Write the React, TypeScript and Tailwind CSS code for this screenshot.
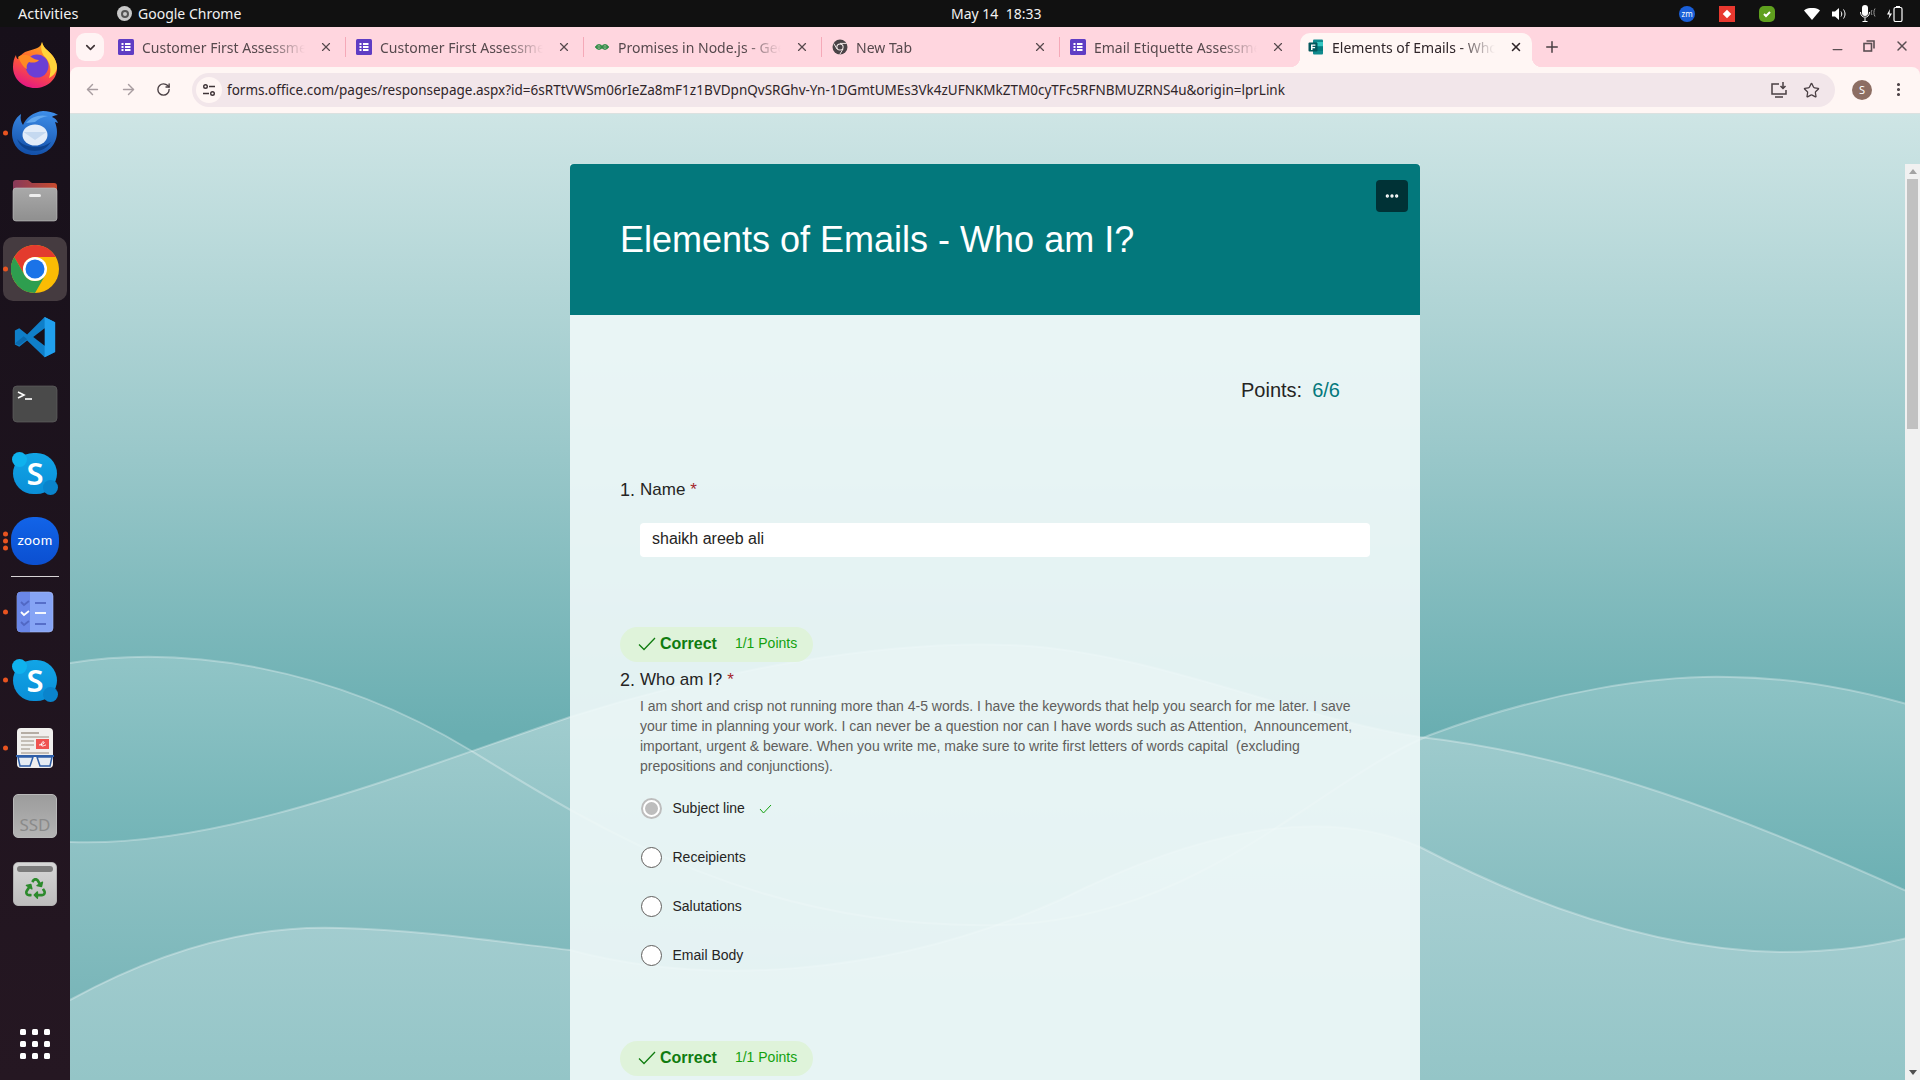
import { ArrowLeft, ArrowRight, ChevronDown, Ellipsis, Minus, MoreVertical, Plus, RotateCw, Star, X } from "lucide-react"
import { FaRecycle } from "react-icons/fa"

const uiFont = "font-['Noto_Sans',sans-serif]"

const urlText =
  "forms.office.com/pages/responsepage.aspx?id=6sRTtVWSm06rIeZa8mF1z1BVDpnQvSRGhv-Yn-1DGmtUMEs3Vk4zUFNKMkZTM0cyTFc5RFNBMUZRNS4u&origin=lprLink"

const tabs = [
  { title: "Customer First Assessment", icon: "form" },
  { title: "Customer First Assessment", icon: "form" },
  { title: "Promises in Node.js - GeeksforGeeks", icon: "gfg" },
  { title: "New Tab", icon: "chrome" },
  { title: "Email Etiquette Assessment", icon: "form" },
  { title: "Elements of Emails - Who am I?", icon: "forms", active: true },
]

const options = ["Subject line", "Receipients", "Salutations", "Email Body"]

function FormFavicon() {
  return (
    <svg width="16" height="16" viewBox="0 0 16 16">
      <rect width="16" height="16" rx="1.5" fill="#5f3dc4" />
      <g fill="#fff">
        <rect x="3.5" y="4" width="2" height="2" />
        <rect x="7" y="4" width="5.5" height="2" />
        <rect x="3.5" y="7" width="2" height="2" />
        <rect x="7" y="7" width="5.5" height="2" />
        <rect x="3.5" y="10" width="2" height="2" />
        <rect x="7" y="10" width="5.5" height="2" />
      </g>
    </svg>
  )
}

function GfgFavicon() {
  return (
    <svg width="16" height="16" viewBox="0 0 16 16" fill="none" stroke="#2f8d46" strokeWidth="1.3">
      <path d="M1 8h14M8 8c-1-3-5-3-6 0 1 3 5 3 6 0zM8 8c1-3 5-3 6 0-1 3-5 3-6 0z" />
    </svg>
  )
}

function ChromeFavicon() {
  return (
    <svg width="16" height="16" viewBox="0 0 16 16">
      <circle cx="8" cy="8" r="7.5" fill="#4a4347" />
      <circle cx="8" cy="8" r="3.6" fill="#fff5f4" />
      <circle cx="8" cy="8" r="2.6" fill="#4a4347" />
      <path d="M8 4.4h6.6M5 10l-3.2-5.5M11 10l-3.3 5.5" stroke="#fff5f4" strokeWidth="0.9" />
    </svg>
  )
}

function FormsFavicon() {
  return (
    <svg width="16" height="16" viewBox="0 0 16 16">
      <rect x="5" y="0.5" width="10" height="15" rx="1" fill="#0f8a8d" />
      <rect x="9" y="3" width="6" height="4" fill="#33c5c0" />
      <rect x="9" y="8" width="6" height="4" fill="#047b7f" />
      <rect x="0.5" y="3.5" width="9" height="9" rx="1" fill="#03585c" />
      <path d="M3 5.5h4.4v1.3H4.5v1.2h2.6v1.3H4.5v1.6H3z" fill="#fff" />
    </svg>
  )
}

function Favicon({ icon }: { icon: string }) {
  if (icon === "form") return <FormFavicon />
  if (icon === "gfg") return <GfgFavicon />
  if (icon === "chrome") return <ChromeFavicon />
  return <FormsFavicon />
}

function FirefoxIcon() {
  return (
    <svg width="48" height="48" viewBox="0 0 48 48">
      <defs>
        <linearGradient id="ffBody" x1="0.7" y1="0" x2="0.3" y2="1">
          <stop offset="0" stopColor="#ffb01f" />
          <stop offset="0.5" stopColor="#ff5a35" />
          <stop offset="1" stopColor="#e31587" />
        </linearGradient>
      </defs>
      <path d="M31 1c1 6 6 8 10 13 4 5 5 9 5 13 0 12-10 20-22 20S2 38 2 26c0-5 1-9 3-12 0 2 1 4 2 4 2-4 6-7 10-8 7-2 13-3 14-9z" fill="url(#ffBody)" />
      <path d="M31 1c1 6 6 8 10 13 4 5 5 9 5 13-1 5-4 8-8 10 3-8 1-16-4-21-3-3-5-9-3-15z" fill="#ffd43b" />
      <circle cx="26" cy="25" r="11.5" fill="#6b3fd4" />
      <path d="M7 16c4-3 9-3 13 0 3 2 5 3 8 3-2 3-7 3-10 2-2 2-3 4-2 7-4-2-6-6-9-12z" fill="#ff8a24" />
    </svg>
  )
}

function ThunderbirdIcon() {
  return (
    <svg width="48" height="48" viewBox="0 0 48 48">
      <defs>
        <linearGradient id="tbBody" x1="0.6" y1="0" x2="0.4" y2="1">
          <stop offset="0" stopColor="#3d8de8" />
          <stop offset="1" stopColor="#124fa8" />
        </linearGradient>
      </defs>
      <path d="M10 5c-1 5 0 8 2 11 3-7 10-13 20-14 5 0 10 1 15 4-3 0-5 1-6 2 3 1 5 3 6 6l-3-1c1 3 2 6 2 10 0 13-10 23-23 23S1 37 1 24C1 16 4 9 10 5z" fill="url(#tbBody)" />
      <path d="M15 14c5-6 13-9 22-7-6 1-10 3-13 6z" fill="#63a9f0" />
      <ellipse cx="24" cy="26" rx="12.500" ry="10.500" fill="#e3edf9" />
      <path d="M12.500 23l11.500 8 11.500-8" fill="#c5d9f0" />
      <path d="M6 30c3 8 10 12 18 12 7 0 12-3 16-9-4 3-9 5-15 5-8 0-14-2-19-8z" fill="#0d438f" />
    </svg>
  )
}

function FilesIcon() {
  return (
    <svg width="48" height="48" viewBox="0 0 48 48">
      <defs>
        <linearGradient id="folderTop" x1="0" y1="0" x2="1" y2="0">
          <stop offset="0" stopColor="#873a5a" />
          <stop offset="1" stopColor="#c84c2f" />
        </linearGradient>
        <linearGradient id="folderBody" x1="0" y1="0" x2="0" y2="1">
          <stop offset="0" stopColor="#a9a9a9" />
          <stop offset="1" stopColor="#8f8f8f" />
        </linearGradient>
      </defs>
      <path d="M2 6a3 3 0 0 1 3-3h12l4 3h22a3 3 0 0 1 3 3v10H2z" fill="url(#folderTop)" />
      <rect x="2" y="11" width="44" height="33" rx="3" fill="url(#folderBody)" stroke="#c5c5c5" strokeWidth="0.6" />
      <rect x="18" y="17" width="12" height="3" rx="1.5" fill="#eeeeee" />
    </svg>
  )
}

function ChromeIcon() {
  return (
    <svg width="48" height="48" viewBox="0 0 48 48">
      <circle cx="24" cy="24" r="24" fill="#fbbc04" />
      <path d="M3.2 12A24 24 0 0 1 44.8 12H24A12 12 0 0 0 13.600 30Z" fill="#e33b2e" />
      <path d="M3.2 12A24 24 0 0 0 24 48L34.400 30A12 12 0 0 1 13.600 30Z" fill="#2e9e4f" />
      <circle cx="24" cy="24" r="12" fill="#fff" />
      <circle cx="24" cy="24" r="9.5" fill="#1a73e8" />
    </svg>
  )
}

function VsCodeIcon() {
  return (
    <svg width="42" height="42" viewBox="0 0 48 48">
      <path d="M35 1l12 6v34l-12 6-20-19-9 7-5-2.500V16.500l5-2.500 9 7z" fill="#0f7fc9" />
      <path d="M35 1l12 6v34l-12 6z" fill="#21a0ee" />
      <path d="M35 14v20L22 24z" fill="#17101a" />
      <path d="M1 31.500l5 2 9-7-4-3.500z" fill="#0b6aae" />
    </svg>
  )
}

function TerminalIcon() {
  return (
    <svg width="48" height="48" viewBox="0 0 48 48">
      <rect x="2" y="5" width="44" height="36" rx="4" fill="#4a4a4a" stroke="#5e5e5e" strokeWidth="0.7" />
      <path d="M7 11l6 3-6 3" fill="none" stroke="#fff" strokeWidth="1.6" />
      <path d="M14 18h7" stroke="#fff" strokeWidth="1.6" />
    </svg>
  )
}

function SkypeIcon() {
  return (
    <div className="relative flex h-[41px] w-[44px] items-center justify-center rounded-[21px] bg-gradient-to-b from-[#12a5e6] to-[#0a8fd8]">
      <span className="absolute -left-[1px] -top-[1px] h-[15px] w-[15px] rounded-full bg-[#0fb2ee]" />
      <span className="absolute -bottom-[1px] -right-[1px] h-[15px] w-[15px] rounded-full bg-[#0a84cc]" />
      <span className="relative font-['Noto_Sans',sans-serif] text-[31px] font-semibold leading-none text-white">S</span>
    </div>
  )
}

function ZoomIcon() {
  return (
    <div className="flex h-[48px] w-[48px] items-center justify-center rounded-[22px] bg-gradient-to-b from-[#1264e8] to-[#0b4fd0]">
      <span className="-mt-[3px] font-['Lato',sans-serif] text-[14px] tracking-[0.4px] text-white">zoom</span>
    </div>
  )
}

function TodoIcon() {
  return (
    <svg width="48" height="48" viewBox="0 0 48 48">
      <rect x="6" y="4" width="36" height="40" rx="4" fill="#86a4f5" stroke="#a9bdf8" strokeWidth="0.6" />
      <path d="M6 8a4 4 0 0 1 4-4h9v40h-9a4 4 0 0 1-4-4z" fill="#6a87e8" />
      <g fill="none" strokeWidth="1.8">
        <path d="M10 14l3 3 5-4" stroke="#5168c4" />
        <path d="M10 24l3 3 5-4" stroke="#fff" />
        <path d="M10 34l3 3 5-4" stroke="#5168c4" />
        <path d="M24 15h11" stroke="#5168c4" />
        <path d="M24 25h11" stroke="#fff" />
        <path d="M24 36h11" stroke="#5168c4" />
      </g>
    </svg>
  )
}

function ReaderIcon() {
  return (
    <svg width="48" height="48" viewBox="0 0 48 48">
      <rect x="6" y="4" width="36" height="40" rx="4" fill="#f0efed" />
      <rect x="10" y="8" width="18" height="2" fill="#b5ada4" />
      <g fill="#c4beb6">
        <rect x="10" y="12" width="28" height="2" />
        <rect x="10" y="16" width="13" height="2" />
        <rect x="10" y="20" width="13" height="2" />
        <rect x="10" y="24" width="9" height="2" />
        <rect x="10" y="28" width="28" height="2" />
      </g>
      <rect x="25" y="15" width="13" height="10" fill="#ef5350" />
      <path d="M28 21c3 0 6-2 5-3-2-1-4 3-2 4 2 0 3-1 4-1" fill="none" stroke="#fff" strokeWidth="1" />
      <path d="M5 32h38" stroke="#2f5fa8" strokeWidth="2" />
      <path d="M7 33l2 9h10l3-9zM26 33l3 9h10l2-9z" fill="#e6ecf2" stroke="#2f5fa8" strokeWidth="1.500" />
    </svg>
  )
}

function SsdIcon() {
  return (
    <div className="flex h-[44px] w-[44px] items-end justify-center rounded-[5px] border border-[#b9b9b9] bg-gradient-to-b from-[#9c9c9c] to-[#b4b4b4] pb-[1px]">
      <span className="font-['Noto_Sans',sans-serif] text-[17px] leading-[22px] text-[#8a8a8a]">SSD</span>
    </div>
  )
}

function TrashIcon() {
  return (
    <div className="flex h-[44px] w-[44px] flex-col items-center rounded-[5px] border border-[#b2b2b2] bg-gradient-to-b from-[#d7d7d7] to-[#bdbdbd] pt-[3px]">
      <span className="h-[6px] w-[36px] rounded-[3px] bg-[#7c7c7c]" />
      <FaRecycle size={21} className="mt-[6px] text-[#2c8a2c]" />
    </div>
  )
}

function GridIcon() {
  return (
    <div className="grid grid-cols-3 gap-[6px]">
      {Array.from({ length: 9 }).map((_, i) => (
        <span key={i} className="h-[6px] w-[6px] rounded-[1.5px] bg-white" />
      ))}
    </div>
  )
}

function DockItem({ dots = 0, active, children }: { dots?: number; active?: boolean; children: React.ReactNode }) {
  return (
    <div className="relative flex h-[68px] w-full items-center justify-center">
      {active && <span className="absolute left-[3px] top-[2px] h-[64px] w-[64px] rounded-[10px] bg-[#453b40]" />}
      {dots > 0 && (
        <span className="absolute left-[3px] top-1/2 flex -translate-y-1/2 flex-col gap-[2px]">
          {Array.from({ length: dots }).map((_, i) => (
            <span key={i} className="h-[5px] w-[5px] rounded-full bg-[#e95420]" />
          ))}
        </span>
      )}
      <span className="relative flex items-center justify-center">{children}</span>
    </div>
  )
}

function Dock() {
  return (
    <aside className="flex w-[70px] shrink-0 flex-col items-center bg-gradient-to-b from-[#17101a] to-[#251722] pt-[4px]">
      <DockItem>
        <FirefoxIcon />
      </DockItem>
      <DockItem dots={1}>
        <ThunderbirdIcon />
      </DockItem>
      <DockItem>
        <FilesIcon />
      </DockItem>
      <DockItem dots={1} active>
        <ChromeIcon />
      </DockItem>
      <DockItem>
        <VsCodeIcon />
      </DockItem>
      <DockItem>
        <TerminalIcon />
      </DockItem>
      <DockItem>
        <SkypeIcon />
      </DockItem>
      <DockItem dots={3}>
        <ZoomIcon />
      </DockItem>
      <div className="mt-[1px] h-[1px] w-[48px] bg-[#d8d4d6]" />
      <div className="h-[1px]" />
      <DockItem dots={1}>
        <TodoIcon />
      </DockItem>
      <DockItem dots={1}>
        <SkypeIcon />
      </DockItem>
      <DockItem dots={1}>
        <ReaderIcon />
      </DockItem>
      <DockItem>
        <SsdIcon />
      </DockItem>
      <DockItem>
        <TrashIcon />
      </DockItem>
      <div className="mt-auto pb-[21px]">
        <GridIcon />
      </div>
    </aside>
  )
}

function TopBar() {
  return (
    <header className={`flex h-[27px] shrink-0 items-center bg-[#111111] text-[14px] text-[#f2f2f2] ${uiFont}`}>
      <div className="w-[117px] pl-[18px] text-[14.5px]">Activities</div>
      <div className="flex items-center gap-[6px]">
        <span className="flex h-[15px] w-[15px] items-center justify-center rounded-full bg-[#c8c8c8]">
          <span className="h-[8px] w-[8px] rounded-full border-2 border-[#555555]" />
        </span>
        <span>Google Chrome</span>
      </div>
      <div className="absolute left-[951px] whitespace-pre">May 14  18:33</div>
      <div className="ml-auto flex items-center pr-[17px]">
        <span className="flex h-[16px] w-[16px] items-center justify-center rounded-full bg-[#1a5fd8] text-[8px] text-white">zm</span>
        <span className="ml-[24px] flex h-[16px] w-[16px] items-center justify-center bg-[#e8382f]">
          <span className="h-[6px] w-[6px] rotate-45 bg-white" />
        </span>
        <span className="ml-[24px] flex h-[16px] w-[16px] items-center justify-center rounded-[5px] bg-[#5fa01e]">
          <svg width="10" height="10" viewBox="0 0 10 10" fill="none" stroke="#fff" strokeWidth="2">
            <path d="M2 5l2 2 4-4" />
          </svg>
        </span>
        <svg className="ml-[29px]" width="16" height="12" viewBox="0 0 16 12">
          <path d="M0 2.500C4-1 12-1 16 2.500L8 12z" fill="#fff" />
        </svg>
        <svg className="ml-[12px]" width="15" height="14" viewBox="0 0 15 14">
          <path d="M0 4.500h3L7 1v12L3 9.500H0z" fill="#fff" />
          <path d="M9 4.500c1 1.500 1 3.500 0 5M11.500 2.500c2 3 2 6 0 9" fill="none" stroke="#fff" strokeWidth="1" />
        </svg>
        <svg className="ml-[13px]" width="18" height="17" viewBox="0 0 18 17" fill="none">
          <rect x="2" y="0" width="6" height="11" rx="3" fill="#fff" />
          <path d="M0.500 7c0 7 9 7 9 0M5 13v4M2.500 16.500h5" stroke="#fff" />
          <path d="M12 5c-1 1.500-1 3.500 0 5M15 3.500c-1.500 2.500-1.500 5.500 0 8" stroke="#999" />
        </svg>
        <svg className="ml-[9px]" width="16" height="16" viewBox="0 0 16 16" fill="none">
          <path d="M3 3L0 8.500h2.500L1.500 13 5 7.500H2.500z" fill="#fff" />
          <rect x="7" y="1.500" width="8" height="14" rx="1.500" stroke="#fff" strokeWidth="1.200" />
          <rect x="9" y="0" width="4" height="1.500" fill="#fff" />
        </svg>
      </div>
    </header>
  )
}

function TabStrip() {
  return (
    <div className={`flex h-[40px] shrink-0 items-end bg-[#ffd6df] text-[14px] ${uiFont}`}>
      <div className="mb-[6px] ml-[6px] mr-[3px] flex h-[28px] w-[28px] shrink-0 items-center justify-center rounded-[9px] bg-[#fff4f4]">
        <ChevronDown size={15} strokeWidth={2.6} className="text-[#3f3437]" />
      </div>
      {tabs.map((tab, i) => (
        <div
          key={i}
          className={`relative flex h-[34px] shrink-0 items-center pb-[6px] ${
            tab.active
              ? "ml-[3px] w-[232px] rounded-t-[10px] bg-[#fff6f4] pl-[8px] text-[#2f2529]"
              : "w-[238px] pl-[11px] text-[#56494d]"
          }`}
        >
          {i > 0 && !tab.active && (
            <span className="absolute left-0 top-[4px] h-[20px] w-[1px] bg-[#f5a9b8]" />
          )}
          {tab.active && (
            <>
              <span className="absolute -left-[10px] bottom-0 h-[10px] w-[10px] bg-[radial-gradient(circle_at_0_0,#ffd6df_10px,#fff6f4_10.5px)]" />
              <span className="absolute -right-[10px] bottom-0 h-[10px] w-[10px] bg-[radial-gradient(circle_at_100%_0,#ffd6df_10px,#fff6f4_10.5px)]" />
            </>
          )}
          <Favicon icon={tab.icon} />
          <span className="ml-[8px] w-[168px] overflow-hidden whitespace-nowrap [mask-image:linear-gradient(to_right,#000_75%,transparent_97%)]">
            {tab.title}
          </span>
          <X size={14} strokeWidth={tab.active ? 2.6 : 2} className="ml-[9px] shrink-0" />
        </div>
      ))}
      <Plus size={18} strokeWidth={2} className="mb-[11px] ml-[11px] text-[#4a3f43]" />
      <div className="mb-[10px] ml-auto flex items-center text-[#5a4e52]">
        <Minus size={15} strokeWidth={2} className="mr-[18px] mt-[8px]" />
        <svg className="mr-[19px]" width="12" height="12" viewBox="0 0 12 12" fill="none" stroke="currentColor" strokeWidth="1.6">
          <rect x="1" y="3.500" width="7.500" height="7.500" />
          <path d="M3.500 1h7.500v7.500" />
        </svg>
        <X size={16} strokeWidth={2.2} className="mr-[10px]" />
      </div>
    </div>
  )
}

function Toolbar() {
  return (
    <div className={`flex h-[47px] shrink-0 items-start rounded-t-[8px] border-b border-[#dbe1e0] bg-[#fff6f4] pt-[6px] ${uiFont}`}>
      <ArrowLeft size={17} strokeWidth={2} className="ml-[14px] mt-[8px] text-[#a89da0]" />
      <ArrowRight size={17} strokeWidth={2} className="ml-[19px] mt-[8px] text-[#a89da0]" />
      <RotateCw size={15} strokeWidth={2.2} className="ml-[19px] mt-[9px] text-[#4a3f43]" />
      <div className="ml-[21px] flex h-[34px] w-[1643px] items-center rounded-full bg-[#f2e6ea]">
        <span className="ml-[4px] flex h-[26px] w-[26px] items-center justify-center rounded-full bg-[#fff6f4]">
          <svg width="14" height="14" viewBox="0 0 14 14" fill="none" stroke="#3f3437" strokeWidth="1.4">
            <circle cx="3.500" cy="3.500" r="1.800" />
            <path d="M7 3.500h6M1 10.500h6" />
            <circle cx="10.500" cy="10.500" r="1.800" />
          </svg>
        </span>
        <span className="ml-[5px] whitespace-nowrap text-[13.5px] text-[#2f2529]">{urlText}</span>
        <svg className="ml-auto" width="18" height="18" viewBox="0 0 18 18" fill="none" stroke="#4a3f43" strokeWidth="1.5">
          <path d="M9 3H2v10h14V9M5 16h8" />
          <path d="M13 1v6M10.500 5l2.500 2.500L15.500 5" />
        </svg>
        <Star size={17} strokeWidth={1.8} className="ml-[15px] mr-[15px] text-[#4a3f43]" />
      </div>
      <span className="ml-[17px] mt-[7px] flex h-[20px] w-[20px] items-center justify-center rounded-full bg-[#8d6e63] text-[11px] text-white">S</span>
      <MoreVertical size={17} strokeWidth={2.4} className="ml-[18px] mt-[8px] text-[#4a3f43]" />
    </div>
  )
}

function Waves() {
  return (
    <svg className="absolute inset-0 h-full w-full" viewBox="70 114 1850 966" preserveAspectRatio="none">
      <defs>
        <linearGradient id="waveBase" gradientUnits="userSpaceOnUse" x1="0" y1="114" x2="0" y2="735">
          <stop offset="0" stopColor="#cee5e5" />
          <stop offset="0.54" stopColor="#9ac8ca" />
          <stop offset="1" stopColor="#69aeb1" />
        </linearGradient>
        <linearGradient id="waveOne" gradientUnits="userSpaceOnUse" x1="0" y1="655" x2="0" y2="890">
          <stop offset="0" stopColor="#91c5c7" />
          <stop offset="1" stopColor="#6cb0b3" />
        </linearGradient>
        <linearGradient id="waveTwo" gradientUnits="userSpaceOnUse" x1="0" y1="720" x2="0" y2="1010">
          <stop offset="0" stopColor="#a0ccce" />
          <stop offset="1" stopColor="#78b5b8" />
        </linearGradient>
        <linearGradient id="waveThree" gradientUnits="userSpaceOnUse" x1="0" y1="850" x2="0" y2="1080">
          <stop offset="0" stopColor="#a9d0d3" />
          <stop offset="1" stopColor="#94c5c7" />
        </linearGradient>
      </defs>
      <rect x="70" y="114" width="1850" height="966" fill="url(#waveBase)" />
      <path d="M70 663C180 645 330 665 470 750C600 830 760 930 1000 925C1200 920 1320 780 1430 735C1550 690 1660 675 1730 677C1800 678 1860 690 1920 708V1080H70Z" fill="url(#waveOne)" />
      <path d="M70 842C220 848 400 775 570 717C720 670 880 640 1010 645C1150 650 1300 720 1420 737C1580 755 1740 815 1920 897V1080H70Z" fill="url(#waveTwo)" />
      <path d="M70 1000C170 945 260 925 340 928C420 930 500 942 570 950C700 985 880 980 1060 900C1200 830 1320 805 1420 847C1560 920 1680 950 1780 952C1840 952 1880 945 1920 935V1080H70Z" fill="url(#waveThree)" />
      <g fill="none" stroke="#ffffff" strokeOpacity="0.3" strokeWidth="2">
        <path d="M70 663C180 645 330 665 470 750C600 830 760 930 1000 925C1200 920 1320 780 1430 735C1550 690 1660 675 1730 677C1800 678 1860 690 1920 708" />
        <path d="M70 842C220 848 400 775 570 717C720 670 880 640 1010 645C1150 650 1300 720 1420 737C1580 755 1740 815 1920 897" />
        <path d="M70 1000C170 945 260 925 340 928C420 930 500 942 570 950C700 985 880 980 1060 900C1200 830 1320 805 1420 847C1560 920 1680 950 1780 952C1840 952 1880 945 1920 935" />
      </g>
    </svg>
  )
}

function CorrectPill({ className }: { className?: string }) {
  return (
    <div className={`flex h-[35px] w-[193px] items-center rounded-full bg-[#dff3da] pb-[2px] pl-[18px] ${className ?? ""}`}>
      <svg width="18" height="14" viewBox="0 0 18 14" fill="none" stroke="#107c10" strokeWidth="1.3">
        <path d="M1 7.500l5 5L17 1" />
      </svg>
      <span className="ml-[4px] text-[16px] font-bold text-[#107c10]">Correct</span>
      <span className="ml-[18px] text-[14px] text-[#13a10e]">1/1 Points</span>
    </div>
  )
}

function Radio({ selected }: { selected?: boolean }) {
  if (selected) {
    return (
      <span className="flex h-[21px] w-[21px] items-center justify-center rounded-full border-2 border-[#bdbdbd] bg-white">
        <span className="h-[13px] w-[13px] rounded-full bg-[#bdbdbd]" />
      </span>
    )
  }
  return <span className="h-[21px] w-[21px] rounded-full border border-[#605e5c] bg-white" />
}

function FormCard() {
  return (
    <section className="relative mx-auto mt-[50px] h-[1500px] w-[850px] bg-[#eff8f8]/90 font-['Liberation_Sans',sans-serif] text-[#252423]">
      <div className="relative h-[151px] rounded-t-[4px] bg-[#03787c] pl-[50px] pt-[54px]">
        <h1 className="text-[36px] leading-[44px] text-white">Elements of Emails - Who am I?</h1>
        <button className="absolute right-[12px] top-[16px] flex h-[32px] w-[32px] items-center justify-center rounded-[4px] bg-[#003236] text-white">
          <Ellipsis size={16} strokeWidth={3} />
        </button>
      </div>
      <div className="pl-[50px] pr-[50px] pt-[63px]">
        <div className="flex justify-end pr-[30px] text-[20px] leading-[24px]">
          <span>Points:</span>
          <span className="ml-[10px] text-[#03787c]">6/6</span>
        </div>

        <div className="mt-[76px] flex items-center text-[17px] leading-[24px]">
          <span className="-mt-[1px] w-[20px] text-[18px]">1.</span>
          <span>Name</span>
          <span className="ml-[5px] text-[#a4262c]">*</span>
        </div>
        <div className="ml-[20px] mt-[21px] flex h-[34px] w-[730px] items-center rounded-[4px] bg-white pb-[2px] pl-[12px] text-[16px]">
          shaikh areeb ali
        </div>

        <CorrectPill className="mt-[70px]" />
        <div className="mt-[6px] flex items-center text-[17px] leading-[24px]">
          <span className="w-[20px] text-[18px]">2.</span>
          <span>Who am I?</span>
          <span className="ml-[5px] text-[#a4262c]">*</span>
        </div>
        <p className="ml-[20px] mt-[4px] w-[730px] text-[14px] leading-[20px] text-[#605e5c]">
          I am short and crisp not running more than 4-5 words. I have the keywords that help you search for me later. I save your
          time in planning your work. I can never be a question nor can I have words such as Attention,{"\u00a0"} Announcement,
          important, urgent &amp; beware. When you write me, make sure to write first letters of words capital{"\u00a0"} (excluding
          prepositions and conjunctions).
        </p>
        <div className="ml-[21px] mt-[8px] flex flex-col">
          {options.map((option, i) => (
            <div key={option} className="flex h-[49px] items-center text-[14px]">
              <Radio selected={i === 0} />
              <span className="ml-[10.5px]">{option}</span>
              {i === 0 && (
                <svg className="ml-[14px]" width="13" height="10" viewBox="0 0 13 10" fill="none" stroke="#13a10e" strokeWidth="1">
                  <path d="M1 5l3.500 4L12 1" />
                </svg>
              )}
            </div>
          ))}
        </div>

        <CorrectPill className="mt-[61px]" />
      </div>
    </section>
  )
}

function Scrollbar() {
  return (
    <div className="absolute bottom-0 right-0 top-[50px] flex w-[15px] flex-col items-center bg-[#f1f1f1]">
      <span className="mt-[5px] h-0 w-0 border-x-[4px] border-b-[5px] border-x-transparent border-b-[#a3a3a3]" />
      <span className="mt-[5px] h-[250px] w-[11px] bg-[#c1c1c1]" />
      <span className="absolute bottom-[5px] h-0 w-0 border-x-[4px] border-t-[5px] border-x-transparent border-t-[#505050]" />
    </div>
  )
}

export default function App() {
  return (
    <div className="relative flex h-screen w-full flex-col overflow-hidden bg-[#111111]">
      <TopBar />
      <div className="flex min-h-0 flex-1">
        <Dock />
        <div className="flex min-w-0 flex-1 flex-col bg-[#ffd6df]">
          <TabStrip />
          <Toolbar />
          <main className="relative min-h-0 flex-1 overflow-hidden">
            <Waves />
            <FormCard />
            <Scrollbar />
          </main>
        </div>
      </div>
    </div>
  )
}
